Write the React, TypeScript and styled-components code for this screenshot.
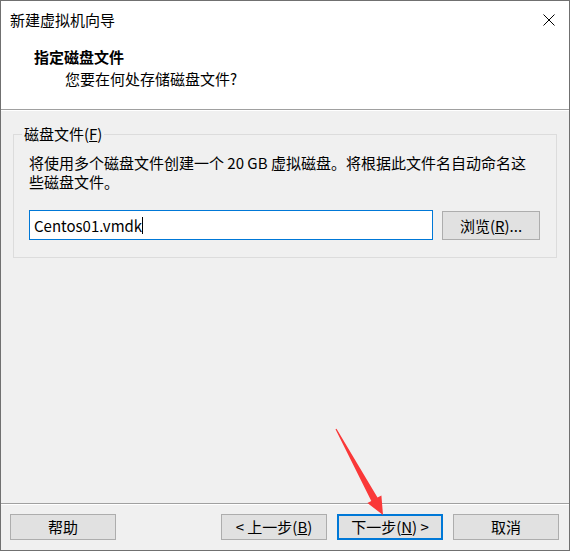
import React from "react";
import styled, { createGlobalStyle } from "styled-components";

const GlobalStyle = createGlobalStyle`
  html, body { margin: 0; padding: 0; background: #ffffff; }
  * { box-sizing: border-box; }
`;

const FONT = `"Microsoft YaHei UI", "Noto Sans CJK SC", sans-serif`;

const Window = styled.div`
  position: relative;
  width: 570px;
  height: 551px;
  border: 1px solid #707070;
  background: #f0f0f0;
  display: flex;
  flex-direction: column;
  font-family: ${FONT};
  font-size: 15px;
  color: #000;
`;

const TitleBar = styled.div`
  height: 38px;
  background: #ffffff;
  display: flex;
  align-items: center;
  justify-content: space-between;
  padding-left: 9px;
  line-height: 20px;
`;

const CloseButton = styled.div`
  width: 40px;
  height: 38px;
  display: flex;
  align-items: center;
  justify-content: center;
`;

const Header = styled.div`
  background: #ffffff;
  padding: 8px 0 20px 33px;
  display: flex;
  flex-direction: column;
  gap: 2px;
`;

const HeaderTitle = styled.div`
  font-weight: 700;
  line-height: 20px;
`;

const HeaderSub = styled.div`
  line-height: 20px;
  margin-left: 31px;
`;

const Etched = styled.div`
  height: 2px;
  border-top: 1px solid #a0a0a0;
  border-bottom: 1px solid #ffffff;
  flex: none;
`;

const Body = styled.div`
  flex: 1;
  padding: 0 12px;
`;

const Group = styled.fieldset`
  margin: 13px 0 0;
  padding: 0;
  border: 1px solid #dcdcdc;
  min-width: 0;
`;

const Legend = styled.legend`
  margin-left: 8px;
  padding: 0 2px;
  line-height: 20px;
  font-size: 15px;
`;

const GroupContent = styled.div`
  padding: 9px 16px 17px 15px;
`;

const Description = styled.p`
  margin: 0;
  line-height: 19px;
  white-space: nowrap;
`;

const FileRow = styled.div`
  margin-top: 19px;
  display: flex;
  align-items: flex-end;
  gap: 9px;
`;

const TextBox = styled.div`
  flex: 1;
  height: 30px;
  background: #ffffff;
  border: 1px solid #0078d7;
  padding: 0 4px;
  display: flex;
  align-items: center;
  font-size: 15px;
`;

const Caret = styled.span`
  display: inline-block;
  width: 1px;
  height: 17px;
  background: #000;
`;

const PushButton = styled.div<{ $width: number; $height: number; $default?: boolean }>`
  width: ${(p) => p.$width}px;
  height: ${(p) => p.$height}px;
  flex: none;
  background: #e1e1e1;
  border: ${(p) => (p.$default ? "2px solid #0078d7" : "1px solid #adadad")};
  display: flex;
  align-items: center;
  justify-content: center;
  font-size: 15px;
  line-height: 20px;
  white-space: pre;
`;

const Footer = styled.div`
  padding: 9px 10px 10px 9px;
  display: flex;
  gap: 10px;
`;

const HelpSlot = styled.div`
  margin-right: auto;
`;

const Overlay = styled.svg`
  position: absolute;
  left: -1px;
  top: -1px;
  pointer-events: none;
`;

export default function App() {
  return (
    <>
      <GlobalStyle />
      <Window>
        <TitleBar>
          <span>新建虚拟机向导</span>
          <CloseButton>
            <svg width="12" height="12" viewBox="0 0 12 12">
              <path d="M0.5 0.5 L11.5 11.5 M11.5 0.5 L0.5 11.5" stroke="#000" strokeWidth="1" fill="none" />
            </svg>
          </CloseButton>
        </TitleBar>
        <Header>
          <HeaderTitle>指定磁盘文件</HeaderTitle>
          <HeaderSub>您要在何处存储磁盘文件?</HeaderSub>
        </Header>
        <Etched />
        <Body>
          <Group>
            <Legend>
              磁盘文件(<u>F</u>)
            </Legend>
            <GroupContent>
              <Description>
                将使用多个磁盘文件创建一个 20 GB 虚拟磁盘。将根据此文件名自动命名这
                <br />
                些磁盘文件。
              </Description>
              <FileRow>
                <TextBox>
                  Centos01.vmdk
                  <Caret />
                </TextBox>
                <PushButton $width={98} $height={29}>
                  浏览(<u>R</u>)...
                </PushButton>
              </FileRow>
            </GroupContent>
          </Group>
        </Body>
        <Etched />
        <Footer>
          <HelpSlot>
            <PushButton $width={106} $height={26}>帮助</PushButton>
          </HelpSlot>
          <PushButton $width={106} $height={26}>
            {"< 上一步("}<u>B</u>)
          </PushButton>
          <PushButton $width={106} $height={26} $default>
            下一步(<u>N</u>{") >"}
          </PushButton>
          <PushButton $width={106} $height={26}>取消</PushButton>
        </Footer>
        <Overlay width="570" height="551" viewBox="0 0 570 551">
          <polygon
            points="335.5,429.3 336.5,428.7 377.5,497.5 381.4,495.4 383,515 367.4,503 371.3,500.9"
            fill="#fa3838"
          />
        </Overlay>
      </Window>
    </>
  );
}
